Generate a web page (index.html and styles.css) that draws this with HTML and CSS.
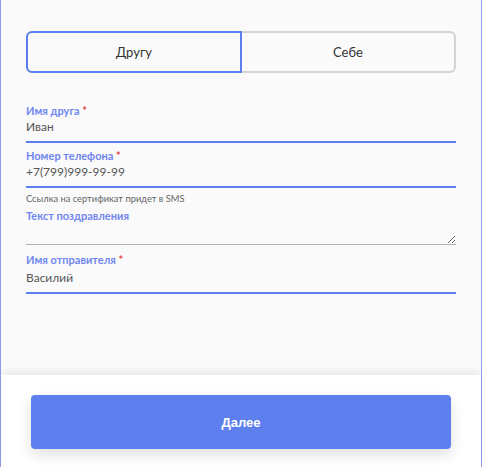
FILE: index.html
```html
<!DOCTYPE html>
<html lang="ru">
<head>
  <meta charset="UTF-8">
  <title>Подарочный сертификат</title>
  <link rel="stylesheet" href="styles.css">
</head>
<body>
<div class="page">
  <div class="content">
    <div class="tabs">
      <button class="tab active">Другу</button>
      <button class="tab">Себе</button>
    </div>

    <form class="form">
      <label class="field filled">
        <span class="label">Имя друга <i>*</i></span>
        <input type="text" value="Иван" />
      </label>

      <label class="field filled">
        <span class="label">Номер телефона <i>*</i></span>
        <input type="text" value="+7(799)999-99-99" />
      </label>
      <p class="hint">Ссылка на сертификат придет в SMS</p>

      <label class="field message">
        <span class="label">Текст поздравления</span>
        <textarea rows="1"></textarea>
      </label>

      <label class="field filled sender">
        <span class="label">Имя отправителя <i>*</i></span>
        <input type="text" value="Василий" />
      </label>
    </form>
  </div>

  <div class="footer">
    <button class="btn-next">Далее</button>
  </div>
</div>
</body>
</html>
```

FILE: styles.css
```css
html, body {
  height: 100%;
}

body {
  margin: 0;
  background: #fafafa;
  font-family: 'Lato', 'Noto Sans', sans-serif;
  color: #555;
}

.page {
  display: flex;
  flex-direction: column;
  height: 100%;
  box-sizing: border-box;
  border-left: 1px solid #8c9ff0;
  border-right: 1px solid #8c9ff0;
}

.content {
  flex: 1;
  padding: 31px 25px 0;
}

.tabs {
  display: flex;
}

.tab {
  flex: 1;
  height: 42px;
  margin: 0;
  padding: 0;
  background: #fafafa;
  border: 2px solid #d4d4d4;
  border-left: 0;
  border-radius: 0 6px 6px 0;
  font-family: inherit;
  font-size: 13px;
  color: #333;
  cursor: pointer;
}

.tab.active {
  border: 2px solid #5b7fee;
  border-radius: 6px 0 0 6px;
}

.form {
  margin-top: 32px;
}

.field {
  display: flex;
  flex-direction: column;
  margin-bottom: 7px;
  border-bottom: 1px solid #b0b0b0;
}

.field.filled {
  border-bottom: 2px solid #5b7fee;
}

.field.message {
  margin-bottom: 9px;
}

.label {
  font-size: 11px;
  font-weight: bold;
  line-height: 12px;
  color: #7086f0;
}

.label i {
  font-style: normal;
  color: #e5474f;
}

.field input,
.field textarea {
  margin: 0;
  padding: 2px 0 6px;
  border: 0;
  background: transparent;
  font-family: inherit;
  font-size: 12px;
  line-height: 16px;
  color: #555;
  outline: none;
}

.field.sender input {
  padding: 4px 0 6px;
}

.field textarea {
  box-sizing: border-box;
  height: 22px;
  padding: 2px 0;
  resize: vertical;
}

.hint {
  margin: -2px 0 6px;
  font-size: 9.3px;
  color: #666;
}

.footer {
  padding: 20px 30px 18px;
  background: #fff;
  box-shadow: 0 -3px 8px rgba(0, 0, 0, 0.08);
}

.btn-next {
  display: block;
  width: 100%;
  height: 54px;
  border: 0;
  border-radius: 4px;
  background: #5e80ee;
  box-shadow: 0 6px 14px rgba(0, 0, 0, 0.12);
  font-family: 'Liberation Sans', Arial, sans-serif;
  font-size: 13px;
  font-weight: bold;
  color: #fff;
  cursor: pointer;
}
```
